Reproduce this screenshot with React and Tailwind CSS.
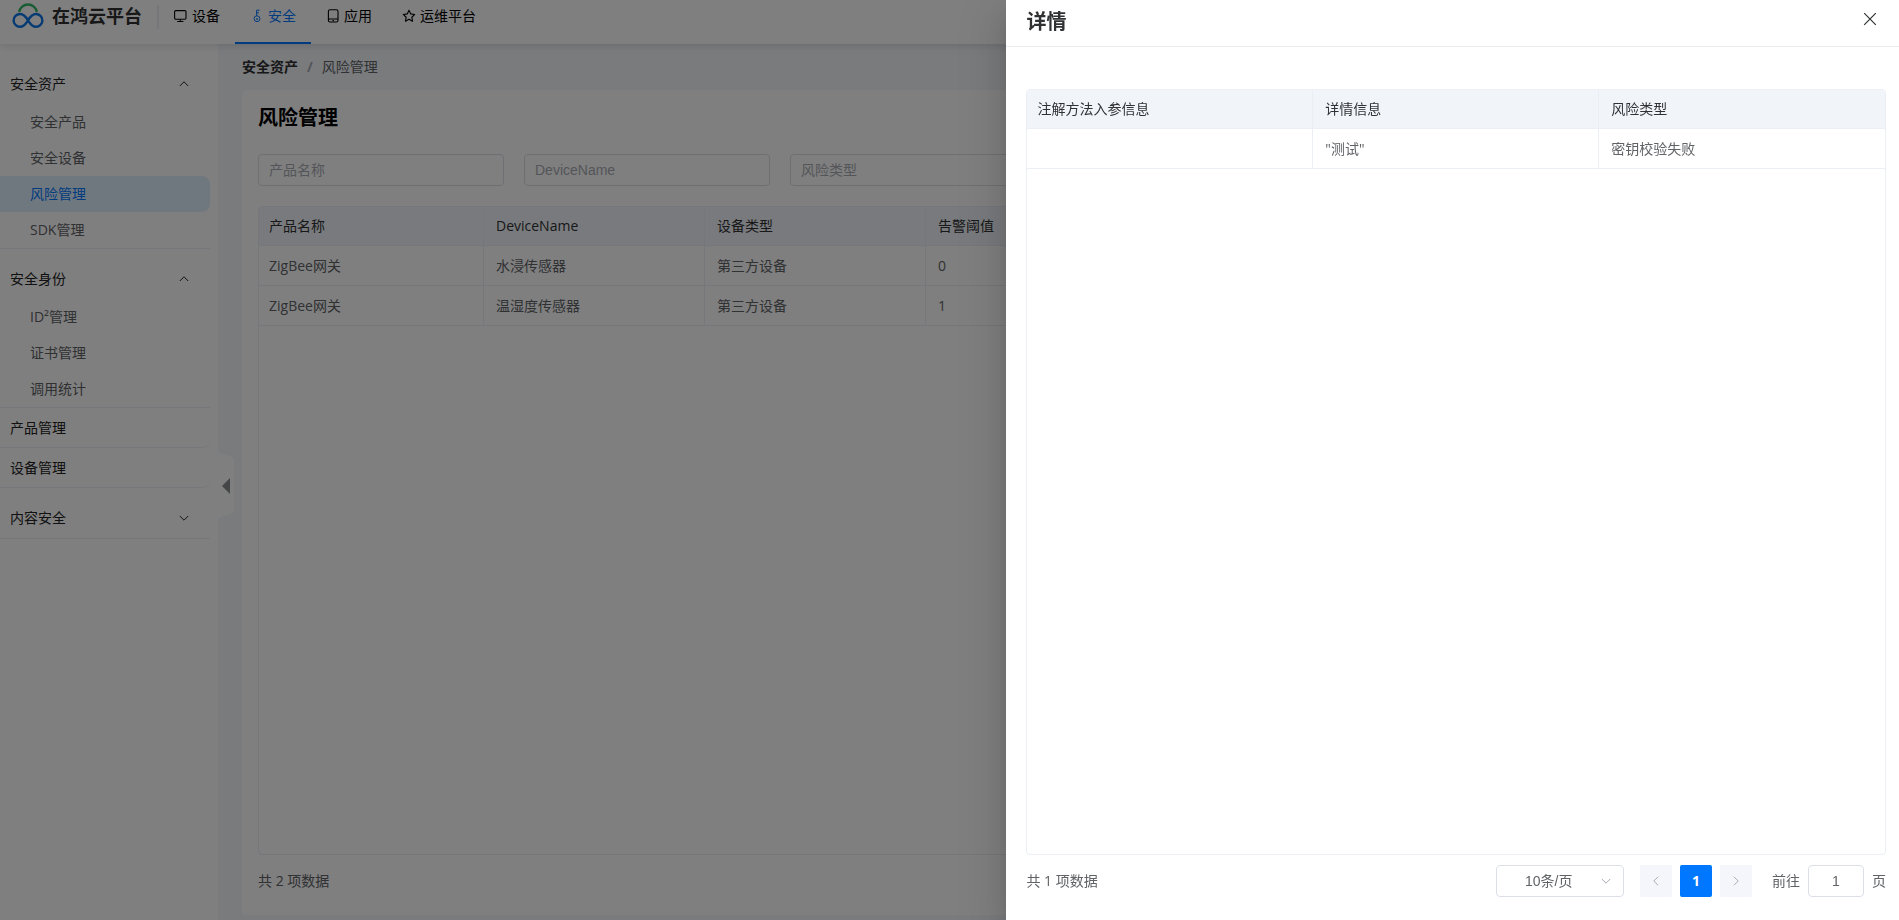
const NAV = [
  { label: "设备", icon: MonitorIcon },
  { label: "安全", icon: KeyIcon, active: true },
  { label: "应用", icon: TabletIcon },
  { label: "运维平台", icon: StarIcon },
];

const COLUMNS = ["产品名称", "DeviceName", "设备类型", "告警阈值"];
const ROWS = [
  ["ZigBee网关", "水浸传感器", "第三方设备", "0"],
  ["ZigBee网关", "温湿度传感器", "第三方设备", "1"],
];

const DETAIL_COLUMNS = ["注解方法入参信息", "详情信息", "风险类型"];
const DETAIL_ROWS = [["", '"测试"', "密钥校验失败"]];

function MonitorIcon() {
  return (
    <svg viewBox="0 0 14 14" className="size-3.5" fill="none" stroke="currentColor" strokeWidth="1.1">
      <rect x=".6" y="1.6" width="11.4" height="8.6" rx="1.2" />
      <path d="M3.2 12.5h6.2M6.3 10.2v2.3" />
    </svg>
  );
}

function KeyIcon() {
  return (
    <svg viewBox="0 0 14 14" className="size-3.5" fill="none" stroke="currentColor" strokeWidth="1">
      <circle cx="7" cy="9.7" r="2.9" />
      <circle cx="7" cy="9.9" r=".5" fill="currentColor" />
      <path d="M6.6 6.8V1.2h3M6.6 3.8h2.4" />
    </svg>
  );
}

function TabletIcon() {
  return (
    <svg viewBox="0 0 14 14" className="size-3.5" fill="none" stroke="currentColor" strokeWidth="1.1">
      <rect x="2.4" y=".8" width="9.6" height="12.2" rx="1.6" />
      <path d="M2.4 10h9.6M6.5 11.6h1.4" />
    </svg>
  );
}

function StarIcon() {
  return (
    <svg viewBox="0 0 14 14" className="size-3.5" fill="none" stroke="currentColor" strokeWidth="1.1" strokeLinejoin="round">
      <path d="M7 1.2l1.75 3.7 4 .55-2.9 2.8.7 4.05L7 10.35 3.45 12.3l.7-4.05-2.9-2.8 4-.55z" />
    </svg>
  );
}

function Chevron({ className, d }) {
  return (
    <svg viewBox="0 0 12 12" className={className} fill="none" stroke="currentColor" strokeWidth="1">
      <path d={d} />
    </svg>
  );
}

const UP = "M1.8 8L6 3.8 10.2 8";
const DOWN = "M1.8 4L6 8.2 10.2 4";
const LEFT = "M8 1.8L3.8 6 8 10.2";
const RIGHT = "M4 1.8L8.2 6 4 10.2";

function Logo() {
  return (
    <svg viewBox="0 0 32 26" className="h-[26px] w-8" fill="none" strokeWidth="2.4">
      <path d="M7.2 9a8.9 8.9 0 0 1 17.6 0" stroke="#2fb866" />
      <path
        d="M16 17.3C13.6 13.2 11.6 11 8 11a6.4 6.4 0 0 0 0 12.8c3.6 0 5.6-2.4 8-6.5s4.4-6.3 8-6.3a6.4 6.4 0 0 1 0 12.8c-3.6 0-5.6-2.4-8-6.5z"
        stroke="#0a75e6"
      />
    </svg>
  );
}

function Header() {
  return (
    <header className="relative z-10 flex h-11 shrink-0 items-start bg-white shadow-[0_2px_8px_rgba(0,0,0,0.12)]">
      <a href="#home" className="flex h-8 items-center gap-2 pl-3">
        <Logo />
        <span className="text-lg font-bold text-[#303133]">在鸿云平台</span>
      </a>
      <div className="mt-[5px] ml-[15px] h-6 w-0.5 bg-[#ebeef5]" />
      <nav className="flex h-full">
        {NAV.map(({ label, icon: Icon, active }) => (
          <a
            key={label}
            href={`#${label}`}
            className={
              active
                ? "flex items-start border-b-2 border-[#0077ff] px-[15px] text-sm text-[#0077ff]"
                : "flex items-start border-b-2 border-transparent px-[15px] text-sm text-black"
            }
          >
            <span className="flex h-8 items-center gap-1">
              <Icon />
              {label}
            </span>
          </a>
        ))}
      </nav>
    </header>
  );
}

function MenuGroup({ title, open, children }) {
  return (
    <section className="mt-2.5 border-b border-[#ebeef5]">
      <button type="button" className="flex h-10 w-full items-center justify-between pr-5 pl-2.5 text-[#222]">
        {title}
        <Chevron className="size-3" d={open ? UP : DOWN} />
      </button>
      {children}
    </section>
  );
}

function MenuItem({ active, children }) {
  return (
    <a
      href="#menu"
      className={
        active
          ? "flex h-9 items-center rounded-r-lg bg-[#e1f0ff] pl-[30px] text-[#0077ff]"
          : "flex h-9 items-center pl-[30px] text-[#606266]"
      }
    >
      {children}
    </a>
  );
}

function MenuLink({ children }) {
  return (
    <a href="#menu" className="flex h-10 items-center rounded-br-lg border-b border-[#ebeef5] pl-2.5 text-[#222]">
      {children}
    </a>
  );
}

function Sidebar() {
  return (
    <aside className="relative w-[218px] shrink-0 bg-white pt-2.5 pr-2 text-sm">
      <MenuGroup title="安全资产" open>
        <MenuItem>安全产品</MenuItem>
        <MenuItem>安全设备</MenuItem>
        <MenuItem active>风险管理</MenuItem>
        <MenuItem>SDK管理</MenuItem>
      </MenuGroup>
      <MenuGroup title="安全身份" open>
        <MenuItem>ID²管理</MenuItem>
        <MenuItem>证书管理</MenuItem>
        <MenuItem>调用统计</MenuItem>
      </MenuGroup>
      <MenuLink>产品管理</MenuLink>
      <MenuLink>设备管理</MenuLink>
      <MenuGroup title="内容安全" />
      <button type="button" aria-label="收起菜单" className="absolute top-1/2 left-full h-[66px] w-4 -translate-y-[30px]">
        <svg viewBox="0 0 16 66" className="h-full w-full">
          <path d="M0 0l16 6v54L0 66z" fill="#fff" />
          <path d="M12 26v16l-8-8z" fill="#8b8d90" />
        </svg>
      </button>
    </aside>
  );
}

function DataTable({ columns, rows, widths }) {
  return (
    <div className="min-h-0 flex-1 overflow-hidden rounded border border-[#ebeef5]">
      <table className="w-full table-fixed border-separate border-spacing-0 text-left text-sm">
        <thead>
          <tr>
            {columns.map((name, i) => (
              <th
                key={name}
                scope="col"
                className={`${widths[i]} h-[39px] border-b border-r border-[#ebeef5] bg-[#f1f5fa] py-0 pr-2.5 pl-3 font-normal text-[#303133] first:pl-2.5 last:border-r-0`}
              >
                {/^[A-Za-z]+$/.test(name) ? <span className="font-medium">{name}</span> : name}
              </th>
            ))}
          </tr>
        </thead>
        <tbody>
          {rows.map((row, r) => (
            <tr key={r}>
              {row.map((cell, c) => (
                <td
                  key={c}
                  className="h-10 border-b border-r border-[#ebeef5] py-0 pr-2.5 pl-3 text-[#606266] first:pl-2.5 last:border-r-0"
                >
                  {cell}
                </td>
              ))}
            </tr>
          ))}
        </tbody>
      </table>
    </div>
  );
}

function FilterInput({ label }) {
  return (
    <input
      type="text"
      aria-label={label}
      placeholder={label}
      className="h-8 w-[246px] rounded border border-[#dcdfe6] bg-white px-2.5 font-['Liberation_Sans','Noto_Sans_CJK_SC',sans-serif] text-sm placeholder:text-[#a8abb2]"
    />
  );
}

function RiskPage() {
  return (
    <main className="flex min-w-0 flex-1 flex-col bg-[#f3f6fb] pr-6 pb-[5px] pl-6">
      <nav aria-label="面包屑" className="flex h-[46px] items-center text-sm">
        <a href="#assets" className="font-bold text-[#303133]">安全资产</a>
        <span className="mx-[9px] font-bold text-[#a8abb2]">/</span>
        <span className="text-[#606266]">风险管理</span>
      </nav>
      <div className="flex min-h-0 flex-1 flex-col rounded bg-white px-4">
        <h1 className="mt-3 h-[52px] text-xl leading-8 font-bold text-black">风险管理</h1>
        <div className="mb-5 flex gap-5">
          <FilterInput label="产品名称" />
          <FilterInput label="DeviceName" />
          <FilterInput label="风险类型" />
        </div>
        <DataTable columns={COLUMNS} rows={ROWS} widths={["w-[225px]", "w-[221px]", "w-[221px]", ""]} />
        <p className="flex h-[60px] items-start pt-4 text-sm text-[#606266]">共 2 项数据</p>
      </div>
    </main>
  );
}

function Pagination() {
  return (
    <div className="flex items-center text-sm text-[#606266]">
      <div className="relative">
        <select
          aria-label="每页条数"
          className="h-8 w-32 appearance-none rounded border border-[#dcdfe6] bg-white pl-7 font-['Liberation_Sans','Noto_Sans_CJK_SC',sans-serif]"
        >
          <option>10条/页</option>
        </select>
        <Chevron className="pointer-events-none absolute top-2.5 right-3 size-3 text-[#a8abb2]" d={DOWN} />
      </div>
      <div className="mx-4 flex gap-2">
        <button type="button" disabled aria-label="上一页" className="flex size-8 items-center justify-center rounded-xs bg-[#f5f6fb] text-[#a8abb2]">
          <Chevron className="size-3" d={LEFT} />
        </button>
        <button type="button" aria-current="page" className="size-8 rounded-xs bg-[#0077ff] font-bold text-white">1</button>
        <button type="button" disabled aria-label="下一页" className="flex size-8 items-center justify-center rounded-xs bg-[#f5f6fb] text-[#a8abb2]">
          <Chevron className="size-3" d={RIGHT} />
        </button>
      </div>
      <label className="ml-1 flex items-center gap-2">
        前往
        <input
          type="text"
          defaultValue="1"
          className="h-8 w-14 rounded border border-[#dcdfe6] text-center font-['Liberation_Sans',sans-serif]"
        />
        页
      </label>
    </div>
  );
}

function DetailDrawer() {
  return (
    <div className="fixed inset-0 z-20 flex justify-end bg-black/50">
      <section
        role="dialog"
        aria-modal="true"
        aria-labelledby="drawer-title"
        className="flex w-[47%] flex-col bg-white shadow-[0_16px_48px_16px_rgba(0,0,0,0.08),0_12px_32px_rgba(0,0,0,0.12),0_8px_16px_-8px_rgba(0,0,0,0.16)]"
      >
        <div className="flex h-[47px] shrink-0 items-start justify-between border-b border-[#ebeef0] pr-[22px] pl-5">
          <h2 id="drawer-title" className="text-xl leading-[44px] font-bold text-[#303133]">详情</h2>
          <button type="button" aria-label="关闭" className="flex h-[38px] items-center text-[#303133]">
            <svg viewBox="0 0 14 14" className="size-3.5" fill="none" stroke="currentColor" strokeWidth="1.2">
              <path d="M1.2 1.2l11.6 11.6M12.8 1.2L1.2 12.8" />
            </svg>
          </button>
        </div>
        <div className="flex min-h-0 flex-1 flex-col pt-[42px] pr-[13px] pl-5">
          <DataTable columns={DETAIL_COLUMNS} rows={DETAIL_ROWS} widths={["w-1/3", "w-1/3", "w-1/3"]} />
          <div className="flex h-[65px] items-start justify-between pt-2.5">
            <p className="text-sm leading-8 text-[#606266]">共 1 项数据</p>
            <Pagination />
          </div>
        </div>
      </section>
    </div>
  );
}

export default function App() {
  return (
    <div className="flex h-screen flex-col bg-white font-['Open_Sans','Noto_Sans_CJK_SC',sans-serif]">
      <Header />
      <div className="flex min-h-0 flex-1">
        <Sidebar />
        <RiskPage />
      </div>
      <DetailDrawer />
    </div>
  );
}
